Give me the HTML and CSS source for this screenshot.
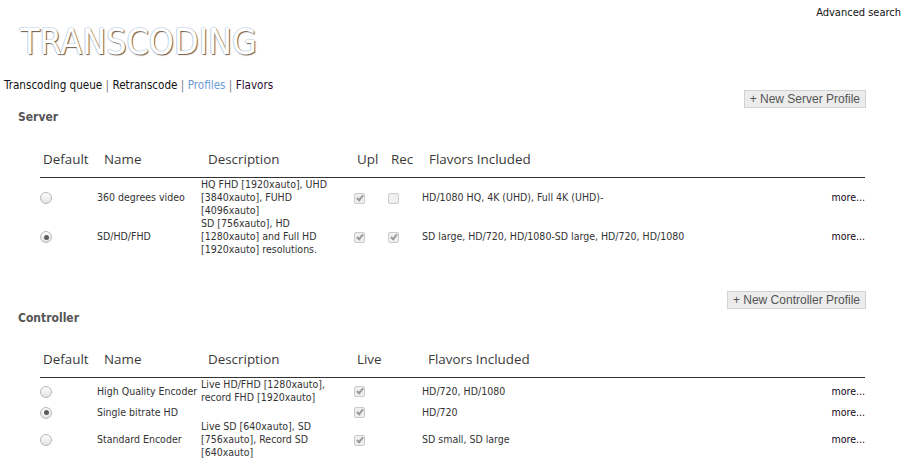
FILE: index.html
```html
<!DOCTYPE html>
<html>
<head>
<meta charset="utf-8">
<link rel="stylesheet" href="styles.css">
</head>
<body>
<div class="topbar"><a class="adv" href="#">Advanced search</a></div>
<h1 class="title">TRANSCODING</h1>
<nav class="nav"><a href="#" class="n-link">Transcoding queue</a> <span class="sep">|</span> <a href="#" class="n-link">Retranscode</a> <span class="sep">|</span> <a href="#" class="n-active">Profiles</a> <span class="sep">|</span> <a href="#" class="n-visited">Flavors</a></nav>

<section class="profiles">
  <div class="btn-row"><button class="btn">+ New Server Profile</button></div>
  <h2 class="group">Server</h2>
  <table class="ptable">
    <colgroup><col class="c-def"><col class="c-name"><col class="c-desc"><col class="c-chk"><col class="c-chk"><col><col class="c-more"></colgroup>
    <thead>
      <tr><th class="first">Default</th><th>Name</th><th>Description</th><th class="narrow">Upl</th><th class="narrow">Rec</th><th>Flavors Included</th><th></th></tr>
    </thead>
    <tbody>
      <tr>
        <td><span class="radio"></span></td>
        <td class="name">360 degrees video</td>
        <td>HQ FHD [1920xauto], UHD<br>[3840xauto], FUHD<br>[4096xauto]</td>
        <td><span class="cb on"></span></td>
        <td><span class="cb"></span></td>
        <td>HD/1080 HQ, 4K (UHD), Full 4K (UHD)-</td>
        <td class="more"><a href="#">more...</a></td>
      </tr>
      <tr>
        <td><span class="radio sel"></span></td>
        <td class="name">SD/HD/FHD</td>
        <td>SD [756xauto], HD<br>[1280xauto] and Full HD<br>[1920xauto] resolutions.</td>
        <td><span class="cb on"></span></td>
        <td><span class="cb on"></span></td>
        <td>SD large, HD/720, HD/1080-SD large, HD/720, HD/1080</td>
        <td class="more"><a href="#">more...</a></td>
      </tr>
    </tbody>
  </table>

  <div class="btn-row ctrl"><button class="btn">+ New Controller Profile</button></div>
  <h2 class="group">Controller</h2>
  <table class="ptable ctrl-table">
    <colgroup><col class="c-def"><col class="c-name"><col class="c-desc"><col class="c-live"><col><col class="c-more"></colgroup>
    <thead>
      <tr><th class="first">Default</th><th>Name</th><th>Description</th><th class="narrow">Live</th><th class="flv">Flavors Included</th><th></th></tr>
    </thead>
    <tbody>
      <tr>
        <td><span class="radio"></span></td>
        <td class="name">High Quality Encoder</td>
        <td>Live HD/FHD [1280xauto],<br>record FHD [1920xauto]</td>
        <td><span class="cb on"></span></td>
        <td>HD/720, HD/1080</td>
        <td class="more"><a href="#">more...</a></td>
      </tr>
      <tr>
        <td><span class="radio sel"></span></td>
        <td class="name">Single bitrate HD</td>
        <td></td>
        <td><span class="cb on"></span></td>
        <td>HD/720</td>
        <td class="more"><a href="#">more...</a></td>
      </tr>
      <tr>
        <td><span class="radio"></span></td>
        <td class="name">Standard Encoder</td>
        <td>Live SD [640xauto], SD<br>[756xauto], Record SD<br>[640xauto]</td>
        <td><span class="cb on"></span></td>
        <td>SD small, SD large</td>
        <td class="more"><a href="#">more...</a></td>
      </tr>
    </tbody>
  </table>
</section>
</body>
</html>
```
FILE: styles.css
```css
html, body {
  margin: 0;
  padding: 0;
  background: #fff;
}
body {
  font-family: "DejaVu Sans Condensed", "DejaVu Sans", sans-serif;
  color: #222;
}
a { text-decoration: none; }

.topbar {
  height: 22px;
  box-sizing: border-box;
  padding: 6px 13px 0 0;
  text-align: right;
  font-size: 11px;
  line-height: 14px;
}
.adv { color: #111; }

.title {
  margin: 0 0 0 20px;
  font-family: "DejaVu Sans Condensed", "DejaVu Sans", sans-serif;
  font-weight: normal;
  font-size: 35.6px;
  line-height: 40px;
  color: #fff;
  text-shadow: 1px 1px 1px #6b5a4a, -1px 0 0 #c8d8ec, 0 -1px 0 #d6e2f0;
}

.nav {
  margin: 15px 0 0 4px;
  font-size: 11.6px;
  line-height: 16px;
  height: 13px;
}
.nav .n-link { color: #111; }
.nav .sep { color: #777; }
.nav .n-active { color: #6e9bd6; }
.nav .n-visited { color: #2b0c33; }

.profiles {
  padding: 0 48px 0 18px;
}
.btn-row {
  display: flex;
  justify-content: flex-end;
}
.btn-row.ctrl { margin-top: 35px; }
.btn {
  height: 18px;
  margin: 0;
  padding: 0 5px;
  border: 1px solid #d2d2d2;
  background: #ececec;
  color: #555;
  font-family: "Liberation Sans", Arial, sans-serif;
  font-size: 12px;
  line-height: 16px;
  border-radius: 0;
}
.group {
  margin: 2px 0 0 0;
  font-size: 12px;
  line-height: 14px;
  font-weight: bold;
  color: #555;
}

.ptable {
  margin: 24px 1px 0 22px;
  width: 825px;
  table-layout: fixed;
  border-collapse: collapse;
  border-spacing: 0;
}
.ptable.ctrl-table { margin-top: 23px; }
.c-def { width: 57px; }
.c-name { width: 104px; }
.c-desc { width: 153px; }
.c-chk { width: 34px; }
.c-live { width: 68px; }
.c-more { width: 40px; }

.ptable th {
  font-family: "Open Sans", "Noto Sans", sans-serif;
  font-weight: normal;
  font-size: 13.4px;
  line-height: 22px;
  color: #3a3a3a;
  text-align: left;
  padding: 0 0 7px 7px;
  border-bottom: 1px solid #333;
  white-space: nowrap;
}
.ptable th.first { padding-left: 3px; }
.ptable th.narrow { padding-left: 3px; }
.ptable th.flv { padding-left: 6px; }

.ptable td {
  font-size: 10.5px;
  line-height: 13px;
  height: 16px;
  padding: 0;
  color: #333;
  vertical-align: middle;
  white-space: nowrap;
}
.ptable td.more { text-align: right; }
.ptable td.more a { color: #120815; }

.radio {
  display: inline-block;
  box-sizing: border-box;
  width: 12px;
  height: 12px;
  margin: 0;
  border: 1px solid #b9b9b9;
  border-radius: 50%;
  background: linear-gradient(#fdfdfd, #e4e4e4);
  vertical-align: middle;
  position: relative;
}
.radio.sel::after {
  content: "";
  position: absolute;
  left: 2.5px;
  top: 2.5px;
  width: 5px;
  height: 5px;
  border-radius: 50%;
  background: #5d5d5d;
}

.cb {
  display: inline-block;
  box-sizing: border-box;
  width: 11px;
  height: 11px;
  border: 1px solid #cacaca;
  border-radius: 2px;
  background: #efefef;
  vertical-align: middle;
  position: relative;
}
.cb.on::after {
  content: "";
  position: absolute;
  left: 3px;
  top: 0px;
  width: 2px;
  height: 5px;
  border: solid #9a9a9a;
  border-width: 0 2px 2px 0;
  transform: rotate(40deg);
}
```
